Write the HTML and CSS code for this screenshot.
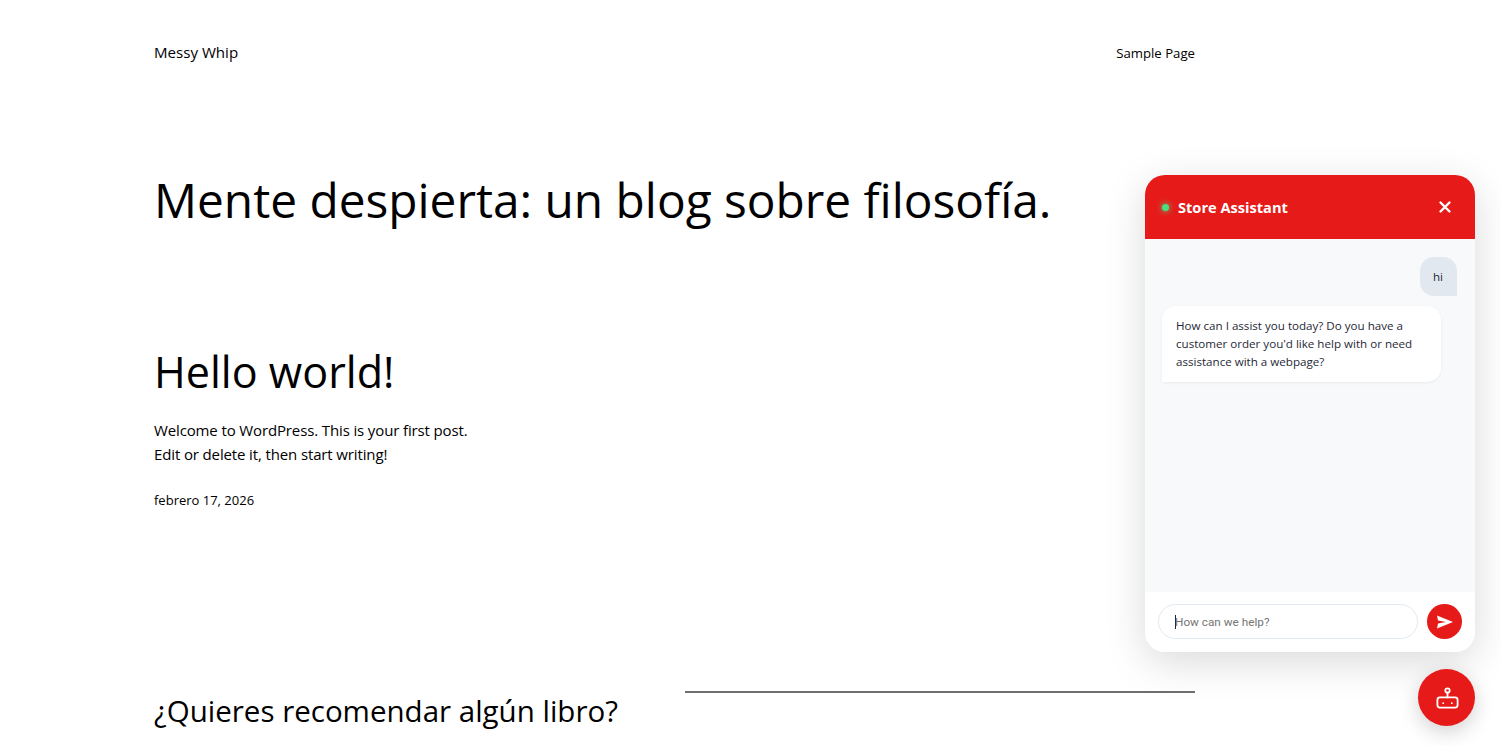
FILE: index.html
```html
<!DOCTYPE html>
<html lang="en">
<head>
<meta charset="UTF-8" />
<meta name="viewport" content="width=device-width, initial-scale=1" />
<title>Messy Whip</title>
<link rel="stylesheet" href="styles.css">
</head>
<body>
<div class="page">
  <header class="site-header">
    <a href="#" class="site-title">Messy Whip</a>
    <nav><a href="#" class="nav-link">Sample Page</a></nav>
  </header>

  <h1 class="blog-title">Mente despierta: un blog sobre filosofía.</h1>

  <article class="post">
    <h2 class="post-title">Hello world!</h2>
    <p class="post-text">Welcome to WordPress. This is your first post.<br>Edit or delete it, then start writing!</p>
    <p class="post-date">febrero 17, 2026</p>
  </article>

  <section class="lower">
    <h3 class="lower-title">¿Quieres recomendar algún libro?</h3>
    <hr class="lower-rule">
  </section>
</div>

<aside class="chat">
  <div class="chat-head">
    <span class="status-dot"></span>
    <span class="chat-name">Store Assistant</span>
    <svg class="chat-close" width="14" height="14" viewBox="0 0 14 14" fill="none" stroke="#fff" stroke-width="2.4" stroke-linecap="round"><path d="M2.5 2.5l9 9M11.5 2.5l-9 9"/></svg>
  </div>
  <div class="chat-body">
    <div class="msg msg-user">hi</div>
    <div class="msg msg-bot">How can I assist you today? Do you have a customer order you'd like help with or need assistance with a webpage?</div>
  </div>
  <div class="chat-foot">
    <div class="chat-input"><span class="caret"></span><span class="placeholder">How can we help?</span></div>
    <button class="send-btn" type="button">
      <svg width="18" height="14" viewBox="0 0 18 14" fill="#fff"><path d="M1 .5L17 7 1 13.500l1-5L10 7 2 5.500z"/></svg>
    </button>
  </div>
</aside>

<button class="chat-toggle" type="button">
  <svg width="26" height="26" viewBox="0 0 26 26" fill="none" stroke="#fff" stroke-width="1.8" stroke-linecap="round" stroke-linejoin="round">
    <circle cx="13.500" cy="5.500" r="2.200"/>
    <path d="M13.500 7.700v4.700"/>
    <rect x="3.400" y="12.400" width="20.200" height="10.200" rx="2.500"/>
    <path d="M9.200 18.200h.01M17.800 18.200h.01"/>
  </svg>
</button>
</body>
</html>
```
FILE: styles.css
```css
html, body {
  height: 100%;
  overflow: hidden;
}
body {
  margin: 0;
  background: #fff;
  color: #000;
  font-family: "Open Sans", "Noto Sans", sans-serif;
}
a {
  color: inherit;
  text-decoration: none;
}
.page {
  width: 1041px;
  margin-left: 154px;
}
.site-header {
  display: flex;
  justify-content: space-between;
  align-items: center;
  padding-top: 40px;
  height: 24px;
}
.site-title {
  font-size: 15.100px;
}
.nav-link {
  font-size: 13.200px;
}
.blog-title {
  margin: 101px 0 0;
  font-size: 47.800px;
  font-weight: 400;
  line-height: 70px;
}
.post {
  margin-top: 107px;
}
.post-title {
  margin: 0;
  font-size: 43.100px;
  font-weight: 400;
  line-height: 60px;
}
.post-text {
  margin: 16px 0 0;
  font-size: 15px;
  letter-spacing: -0.13px;
  line-height: 24px;
}
.post-date {
  margin: 22px 0 0;
  font-size: 13px;
  line-height: 24px;
}
.lower {
  display: grid;
  grid-template-columns: 511px 510px;
  column-gap: 20px;
  margin-top: 179px;
}
.lower-title {
  margin: 0;
  font-size: 29.500px;
  font-weight: 400;
  line-height: 40px;
}
.lower-rule {
  margin: 0;
  height: 2px;
  border: 0;
  background: #6f6f6f;
}

.chat {
  position: fixed;
  top: 175px;
  right: 25px;
  width: 330px;
  height: 477px;
  display: flex;
  flex-direction: column;
  border-radius: 20px;
  overflow: hidden;
  background: #fff;
  box-shadow: 0 10px 40px rgba(0, 0, 0, 0.15);
}
.chat-head {
  display: flex;
  align-items: center;
  height: 64px;
  padding: 0 23px 0 17px;
  background: #e61a19;
  color: #fff;
  box-sizing: border-box;
}
.status-dot {
  width: 7px;
  height: 7px;
  border-radius: 50%;
  background: #4ade80;
  box-shadow: 0 0 6px #4ade80;
}
.chat-name {
  margin-left: 9px;
  font-size: 14.600px;
  font-weight: 700;
}
.chat-close {
  margin-left: auto;
}
.chat-body {
  flex: 1;
  display: flex;
  flex-direction: column;
  gap: 10px;
  padding: 18px 18px 0 17px;
  background: #f8f9fb;
  font-size: 11.600px;
  line-height: 18px;
  color: #1f2937;
}
.msg {
  box-sizing: border-box;
}
.msg-user {
  align-self: flex-end;
  padding: 11px 14px 10px 13px;
  background: #e2e8f0;
  border-radius: 14px 14px 0 14px;
}
.msg-bot {
  align-self: flex-start;
  width: 279px;
  padding: 11px 14px;
  background: #fff;
  border-radius: 14px 14px 14px 0;
  box-shadow: 0 1px 3px rgba(0, 0, 0, 0.06);
}
.chat-foot {
  display: flex;
  align-items: center;
  gap: 9px;
  height: 60px;
  padding: 0 13px 1px;
  box-sizing: border-box;
  background: #fff;
}
.chat-input {
  flex: 1;
  display: flex;
  align-items: center;
  height: 35px;
  padding-left: 16px;
  border: 1px solid #e2e8f0;
  border-radius: 18px;
  box-sizing: border-box;
}
.caret {
  width: 1px;
  height: 14px;
  margin-right: -1px;
  background: #222;
}
.placeholder {
  font-family: Roboto, sans-serif;
  font-size: 11.750px;
  color: #757575;
}
.send-btn {
  display: flex;
  align-items: center;
  justify-content: center;
  width: 35px;
  height: 35px;
  padding: 0;
  border: 0;
  border-radius: 50%;
  background: #e61a19;
}
.chat-toggle {
  position: fixed;
  right: 25px;
  bottom: 20px;
  display: flex;
  align-items: center;
  justify-content: center;
  width: 57px;
  height: 57px;
  padding: 0;
  border: 0;
  border-radius: 50%;
  background: #e61a19;
  box-shadow: 0 6px 20px rgba(0, 0, 0, 0.18);
}
```
